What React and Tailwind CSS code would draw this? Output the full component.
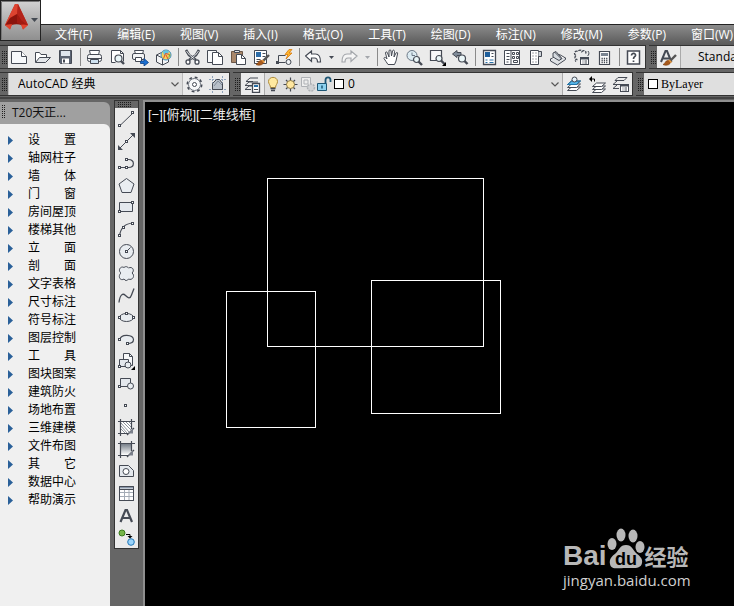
import React from "react";

const ink = "#454a54";

const Icon = ({ children }) => (
  <svg
    viewBox="0 0 17 17"
    className="w-[17px] h-[17px] shrink-0"
    fill="none"
    stroke={ink}
    aria-hidden="true"
  >
    {children}
  </svg>
);

const Node = ({ x, y }) => (
  <rect x={x - 1} y={y - 1} width="2" height="2" fill="#fff" />
);

const Lens = ({ x, y, r = 3 }) => (
  <>
    <path d={`M${x + 2} ${y + 2}l3.5 3.5`} strokeWidth="2.4" />
    <circle cx={x} cy={y} r={r} fill="#eaf6f8" strokeWidth="1.2" />
  </>
);

const Brush = () => (
  <>
    <path d="M10 12l6-6" stroke="#555" strokeWidth="2.4" />
    <path
      d="M3 15.5c2.5-.5 2-4 5-4 2 0 3 1.5 2 3-1.5 2-5 2-7 1z"
      fill="#a85a1c"
      stroke="#8a4715"
      strokeWidth=".8"
    />
    <path d="M9 11l2.5 2.5" stroke="#e8973a" strokeWidth="1.6" />
  </>
);

const Stack = ({ top = "#fff" }) => (
  <>
    <path d="M1.5 14.5l4-3.5h9l-4 3.5z" fill="#fff" />
    <path d="M1.5 11.5l4-3.5h9l-4 3.5z" fill="#fff" />
    <path d="M1.5 8.5l4-3.5h9l-4 3.5z" fill={top} />
  </>
);

const Panel = ({ x, y }) => (
  <>
    <rect x={x} y={y} width="8" height="7" fill="#fff" />
    <path d={`M${x} ${y + 1}h8`} strokeWidth="2" />
    <path d={`M${x + 2} ${y + 3.5}h1m1 0h2.5m-4.5 2h1m1 0h2.5`} />
  </>
);

const icons = {
  new: (
    <>
      <path d="M.5 2.5h10l5 5v7H.5z" fill="#f7f9fb" />
      <path d="M10.5 2.5v5h5" fill="#fff" />
    </>
  ),
  open: (
    <>
      <path d="M1.5 13V3.5h4l1.5 2h5.5v3" fill="#fff" />
      <path d="M1.5 13.5l4-5h11l-5 5z" fill="#e4e7ea" />
    </>
  ),
  save: (
    <>
      <path d="M2.5 1.5h12v13h-11l-1-1z" fill="#5b6473" />
      <path d="M4 2h9v5H4z" fill="#dfe6ee" stroke="none" />
      <path d="M5 9.5h7v5H5z" fill="#fff" stroke="none" />
      <path d="M6 10.5h2v3H6z" fill="#454a54" stroke="none" />
    </>
  ),
  print: (
    <>
      <path d="M4.5 6l-1-4.5h10l-1 4.5" fill="#fff" />
      <rect x="1.5" y="5.5" width="14" height="7" rx="2" fill="#f3f4f5" />
      <path d="M2 9.5h13" />
      <path d="M4.5 10.5h8v4h-8z" fill="#cfe2f0" />
    </>
  ),
  preview: (
    <>
      <path d="M2.5 13.500V1.500h9l3 3v8" fill="#fff" />
      <path d="M11.5 1.5v3h3M2.5 13.5h4" />
      <Lens x={9.5} y={9.5} r={3.5} />
    </>
  ),
  publish: (
    <>
      <path d="M3.5 5l-1-3.5h9l-1 3.5" fill="#fff" />
      <rect x=".5" y="4.5" width="12" height="6" rx="1.5" fill="#f3f4f5" />
      <path d="M3.5 8.5h6v4h-6z" fill="#fff" />
      <path
        d="M8.500 12h3.500v-2.500l4.500 4-4.500 3.500v-2.500H8.500z"
        fill="#1a6fd0"
        stroke="#0b3f86"
        strokeWidth=".8"
      />
    </>
  ),
  globe: (
    <>
      <path d="M1.5 6l6-3 6 3v7l-6 3-6-3z" fill="#f3f4f5" />
      <path d="M1.5 6l6 3 6-3M7.5 9v7" />
      <circle cx="11" cy="6" r="5" fill="#f4d35b" stroke="#3f8fc4" />
      <path d="M8 3c1-2 5-2 6 0l-2 2-3 1z" fill="#5cc4e8" stroke="none" />
      <path d="M8.5 9.5l2-5 4 1M11 6l2 4" stroke="#dc4b2c" />
      <path d="M14 5l1.5 1-2 3.5z" fill="#69b345" stroke="none" />
    </>
  ),
  cut: (
    <>
      <path d="M2 1l3 5 7 5M15 1l-3 5-7 5" strokeWidth="2.6" />
      <path d="M2.500 2l3 4 5 4M14.500 2l-3 4-5 4" stroke="#fff" strokeWidth=".8" />
      <ellipse cx="4" cy="13" rx="2" ry="2.2" fill="#fff" strokeWidth="1.3" />
      <ellipse cx="13" cy="13" rx="2" ry="2.2" fill="#fff" strokeWidth="1.3" />
    </>
  ),
  copy: (
    <>
      <path d="M.5 1.5h9v12h-9z" fill="#f7f8f9" />
      <path d="M5.5 3.5h6l4 4v8h-10z" fill="#fff" />
      <path d="M11.5 3.5v4h4" />
    </>
  ),
  paste: (
    <>
      <path d="M1.5 2.5h11v11h-11z" fill="#a9876a" stroke="#6c5747" />
      <path d="M4.5 1.5h5v2h-5z" fill="#e4e6e8" />
      <path d="M6.5 5.5h5l4 4v6h-9z" fill="#fff" />
      <path d="M11.5 5.5v4h4" />
    </>
  ),
  match: (
    <>
      <path d="M1.5 1.5h12v13h-12z" fill="#fff" />
      <path d="M3 3h5v5H3z" fill="#2c6ca8" stroke="none" />
      <path d="M9.5 4.5h3M9.5 7.5h3M3.5 10.5h4M3.5 12.5h3" />
      <Brush />
    </>
  ),
  block: (
    <>
      <path d="M2.5 13.5v-7h7M1.5 13.5h8M13.5 10v3" />
      <circle cx="12.5" cy="13" r="2.5" fill="#eef1f4" />
      <path d="M0 12h3v3H0z" fill={ink} stroke="none" />
      <path
        d="M13 .5l-4 5h3L10 10l6-6h-3l3-3.500z"
        fill="#ffb72e"
        stroke="#d8790b"
        strokeWidth=".8"
      />
    </>
  ),
  undo: (
    <path
      d="M.5 7l6-5v3h4c4 0 5 3 5 8h-3c0-3-1-4-3-4h-3v3.5z"
      fill="#fff"
      strokeWidth="1.2"
    />
  ),
  redo: (
    <path
      d="M16 7l-6-5v3H6c-4 0-5 3-5 8h3c0-3 1-4 3-4h3v3.5z"
      fill="#f5f5f5"
      stroke="#a3a6ab"
      strokeWidth="1.2"
    />
  ),
  pan: (
    <path
      d="M5 15.5c-1-2-3-4-4-6 0-1.5 1.5-1.5 3 .5L2.5 4c0-1.5 1.5-1.5 2 0L6 8V2c0-1.500 2-1.500 2 0l.5 5 1-5c.5-1.500 2-1 2 .5L11 8l2-4c1-1 2-.5 1.500 1L13 12l-1.500 3.500z"
      fill="#fff"
    />
  ),
  zoomTime: (
    <>
      <circle cx="6" cy="6.5" r="5" fill="#dcebf2" stroke="#6b7886" />
      <path d="M6 3.5v3h3" stroke="#6b7886" />
      <Lens x={10.5} y={10.5} />
    </>
  ),
  zoomWin: (
    <>
      <path d="M1.5 1.5h11v10h-11z" fill="#f7f8f9" strokeWidth="1.2" />
      <Lens x={10} y={9.5} />
      <path d="M17 13v4h-4z" fill="#000" stroke="none" />
    </>
  ),
  zoomPrev: (
    <>
      <path d="M.5 5L5 1.5v2h4v3H5v2z" fill="#7f8b99" />
      <Lens x={10} y={9.5} r={3.5} />
    </>
  ),
  properties: (
    <>
      <path d="M2.5 1.5h12v14h-12z" fill="#fff" strokeWidth="1.3" />
      <path d="M4 3h5v5H4z" fill="#1f5f9c" stroke="none" />
      <path d="M10.5 4.5h2M10.5 7.5h2" />
      <path d="M4.5 11h2m2 0h4M4.5 13.5h2m2 0h4" stroke="#2870a8" />
    </>
  ),
  design: (
    <>
      <path d="M.5 1.5h15v14H.5zM7 2v13" fill="#fff" />
      <path d="M2.5 4.5h3M2.5 7.5h3M2.5 10.5h3M2.5 13h2" />
      <path d="M8.5 3.5h2v2h-2zm4 0h2v2h-2zm-4 4h2v2h-2zm4 0h2v2h-2zm-3 4h4v2h-4z" />
    </>
  ),
  palettes: (
    <>
      <path d="M3.5 1.5h8v14h-8z" fill="#fff" />
      <path d="M11.5 2.5h3v5h-3" fill="#cdd2d8" />
      <path d="M5.5 4h1m2 0h1m-4 3h1m2 0h1m-4 3h1m2 0h1m-4 3h1m2 0h1" />
    </>
  ),
  sheets: (
    <>
      <path d="M.5 10l9-4.500 6 3.500-8 5.500z" fill="#fff" />
      <path d="M.5 10v2l7 4 8-5.500V9" fill="#dfe2e5" />
      <path d="M3 8V4l3-1.500 6 7-3 2z" fill="#d5dadf" />
      <path d="M4.5 3l7 7" />
    </>
  ),
  markup: (
    <>
      <path
        d="M3 6.5C0 5 2 1 5 2.500c1-2 4-1.500 4 0 2-2 5 0 3.500 2M3 6.500c-2 2-1 4.500 1.500 4"
        strokeDasharray="3 1"
        strokeWidth="1.3"
      />
      <path d="M15 2c1.5 2 1 4-.5 5M3 13c-1-1-1-2 .5-3" />
      <Panel x={7.5} y={8.5} />
    </>
  ),
  calc: (
    <>
      <path d="M3.5 2.5h10v13h-10z" fill="#fff" strokeWidth="1.2" />
      <path d="M5 4h7v3H5z" fill="#7b8592" stroke="none" />
      <path
        d="M5.5 9.5h6M5.5 11.5h6M5.5 13.5h6"
        strokeDasharray="1.3 1"
        strokeWidth="1.3"
      />
    </>
  ),
  help: (
    <>
      <path d="M2.5 2h12v13h-12z" fill="#fff" strokeWidth="1.5" />
      <path
        d="M6.5 6.5c0-3 4.5-2.500 4 0-.3 1.300-2 1.200-2 3.500M8.500 11.500V13"
        strokeWidth="1.7"
      />
    </>
  ),
  textStyle: (
    <>
      <path d="M1 13L5.5 2H7l4.500 11M2.500 9.500h7" strokeWidth="2" />
      <Brush />
    </>
  ),
  gear: (
    <>
      <circle cx="8.5" cy="8.5" r="7.2" strokeWidth="1.6" strokeDasharray="2.8 2.855" />
      <circle cx="8.5" cy="8.5" r="6" fill="#f7f8f9" stroke="#6d737d" />
      <circle cx="8.5" cy="8.5" r="2" fill="#fff" />
    </>
  ),
  house: (
    <>
      <path
        d="M3.5 0v17M13.5 0v17M0 3.5h17M0 13.5h17"
        strokeDasharray="2 1"
        stroke="#8fa3bb"
      />
      <path d="M3.5 13.5v-6l4-4h3l3 4v6z" fill="#b7bfc9" />
      <path d="M5 10l4-5 4 4" stroke="#838e9b" />
    </>
  ),
  layerProps: (
    <>
      <path d="M2 5.5L6 2h8M1 9.5L5 6h9M1 13.5L5 10h3M2 5.5h7M1 9.5h7M1 13.5h6" />
      <path d="M8.5 7.5h7v9h-7z" fill="#fff" strokeWidth="1.3" />
      <path d="M10 9h4v2h-4z" fill="#2870a8" stroke="none" />
      <path d="M10 13.5h4" />
    </>
  ),
  layerCurrent: (
    <>
      <Stack top="#55b5e8" />
      <path d="M1.5 8.5l4-3.5h9l-4 3.5z" stroke="#2077ad" />
      <circle cx="8.5" cy="3.5" r="2.5" fill="#e4f2fa" />
    </>
  ),
  layerPrev: (
    <>
      <g transform="translate(2 2)">
        <Stack />
      </g>
      <path d="M0 3l3-3v6z" fill="#000" stroke="none" />
      <path d="M3 3h2.5v2.5" stroke="#000" />
    </>
  ),
  layerStates: (
    <>
      <path d="M3 4.5l3-3h9l-3 3zM1 8.5L5 5M1 8.5h8M1 12.500L5 9M1 12.500h6" />
      <Panel x={8.5} y={8.5} />
    </>
  ),
  bulb: (
    <>
      <path
        d="M5.5 11.5C5.500 9 3.500 8 3.500 5.500c0-5.500 9-5.500 9 0 0 2.500-2 3.500-2 6z"
        fill="#ffe9a0"
        stroke="#b08d3c"
      />
      <path d="M5.5 12.5h5M6 14.5h4" strokeWidth="1.5" />
    </>
  ),
  sun: (
    <>
      <path d="M8.5 1.500v14M1.500 8.500h14M4 4l9 9M13 4l-9 9" strokeWidth="1.2" />
      <circle cx="8.5" cy="8.5" r="4" fill="#ffe7a0" stroke="#8e7a46" />
    </>
  ),
  viewport: (
    <g stroke="#aeb1b5">
      <path d="M2.5 1.5h9v9h-9zM5 4h4v4H5z" fill="#eee" />
      <circle
        cx="12"
        cy="11.5"
        r="3.5"
        fill="#d0d2d4"
        strokeDasharray="2 1"
        strokeWidth="1.5"
      />
    </g>
  ),
  lock: (
    <>
      <path d="M9.5 7V4c0-3.500 5-3.500 5 0v2" strokeWidth="1.8" stroke="#1d5674" />
      <path d="M1.5 7.5h9v7h-9z" fill="#8ed1ee" stroke="#1d5674" />
      <path d="M6 9.500v3" stroke="#1d5674" strokeWidth="1.5" />
    </>
  ),
  line: (
    <>
      <path d="M1.5 15L15 2" />
      <Node x={1.5} y={14.5} />
      <Node x={14.5} y={1.5} />
    </>
  ),
  ray: (
    <>
      <path d="M2 15L15 2" />
      <path d="M0 17v-5l5 5zM17 0v5l-5-5z" fill={ink} stroke="none" />
      <Node x={8.5} y={8.5} />
    </>
  ),
  polyline: (
    <>
      <path d="M1.5 12.5h9c6.500 0 6.500-8 0-8h-2" strokeWidth="1.2" />
      <Node x={1.5} y={12.5} />
      <Node x={8.5} y={12.5} />
      <Node x={8.5} y={4.5} />
    </>
  ),
  polygon: <path d="M8.500 1.500L16 7l-3 8.500H4L1 7z" fill="#e9edf1" />,
  rect: (
    <>
      <path d="M1.5 3.5h13v9h-13z" fill="#e4e8ed" />
      <Node x={1.5} y={12.5} />
      <Node x={14.5} y={3.5} />
    </>
  ),
  arc: (
    <>
      <path d="M1.5 15C2.500 7 7 2.500 15 2" strokeWidth="1.2" />
      <Node x={1.5} y={14.5} />
      <Node x={5.5} y={6.5} />
      <Node x={14.5} y={2.5} />
    </>
  ),
  circle: (
    <>
      <circle cx="8.5" cy="8.5" r="7" fill="#e9edf1" />
      <path d="M8.5 8.5l4-4" />
      <Node x={8.5} y={8.5} />
    </>
  ),
  cloud: (
    <path
      d="M3 8C-.5 5.500 2.500.5 6 2.500c2.500-2 4 0 4.500.5 4-2 6.500 2.500 3.500 5 3.500 2.500.5 8-3.500 6-1 2-3.500 2-4.500 0C2 16.500-.5 11 3 8z"
      fill="#e9edf1"
    />
  ),
  spline: (
    <path
      d="M1 15.500C2 7 5 6 7.500 8.500s4.500 4 6-.5L16 1.500"
      strokeWidth="1.3"
    />
  ),
  ellipse: (
    <>
      <ellipse cx="8.5" cy="8.5" rx="7" ry="4" fill="#e9edf1" />
      <Node x={1.5} y={8.5} />
      <Node x={15.5} y={8.5} />
      <Node x={8.5} y={4.5} />
    </>
  ),
  ellipseArc: (
    <>
      <path
        d="M2 8.500c1-6 13-5 13.500 0 0 2.500-2.500 4-6 4"
        fill="#e9edf1"
        strokeWidth="1.2"
      />
      <Node x={1.5} y={8.5} />
      <Node x={9.5} y={12.5} />
    </>
  ),
  insert: (
    <>
      <path d="M5.5 8V.5h6l3 3v9h-3" fill="#f7f8f9" />
      <path d="M11.5.5v3h3" />
      <path d="M1.5 6.5h9v7h-9z" fill="#e4e8ed" />
      <circle cx="10" cy="12" r="3" fill="#e9edf1" />
      <Node x={1.5} y={13.5} />
      <path d="M17 13v4h-4z" fill="#000" stroke="none" />
    </>
  ),
  makeBlock: (
    <>
      <path d="M2.5 3.5h10v8h-10z" fill="#e4e8ed" />
      <circle cx="12.5" cy="11" r="3" fill="#e9edf1" />
      <Node x={1.5} y={11.5} />
    </>
  ),
  point: <Node x={7.5} y={8.5} />,
  hatch: (
    <>
      <path d="M3 3h11v8l-4 3H3z" fill="#fff" stroke="none" />
      <path
        d="M3 4l8 9M3 7l6 7M3 10l4 4M5 3l8 8M8 3l6 6M11 3l3 3"
        stroke="#6f7681"
        strokeWidth=".8"
      />
      <path d="M0 2.5h17M2.5 0v17M13.5 0v10M0 14.5h10M16 9l-7 7" strokeWidth="1.2" />
      <path d="M10 14.5l5-5v5z" fill="#7b808b" stroke="none" />
    </>
  ),
  gradient: (
    <>
      <defs>
        <linearGradient id="fade" x1="0" y1="0" x2="0" y2="1">
          <stop offset="0" stopColor="#77808a" />
          <stop offset="1" stopColor="#fff" />
        </linearGradient>
      </defs>
      <path d="M3 3h11v8l-4 3H3z" fill="url(#fade)" stroke="none" />
      <path d="M0 2.5h17M2.5 0v17M13.5 0v10M0 14.5h10M16 9l-7 7" strokeWidth="1.2" />
      <path d="M10 14.5l5-5v5z" fill="#7b808b" stroke="none" />
    </>
  ),
  region: (
    <>
      <path d="M1.5 2.5h9l5 5v6h-14z" fill="#e4e8ed" />
      <circle cx="8" cy="8.5" r="3" fill="#fff" />
    </>
  ),
  table: (
    <>
      <path d="M1.5 1.5h14v14h-14z" fill="#fff" />
      <path d="M1.5 2.5h14" stroke="#8996a8" strokeWidth="2" />
      <path d="M2 7.5h13M2 11.5h13M6.5 5v10M11 5v10" stroke="#a3abb5" />
      <path d="M1.5 4.5h14M1.5 1.5h14v14h-14z" />
    </>
  ),
  mtext: <path d="M2.500 15L7.500 3h1.500l5 12M4.500 11h8" strokeWidth="2.2" />,
  addSelected: (
    <>
      <circle cx="4" cy="4" r="3" fill="#76b548" stroke="#397a1d" />
      <circle cx="13" cy="13" r="3.3" fill="#9ad4fb" stroke="#2378b8" />
      <path d="M8 5.5h4v2" stroke="#000" />
      <path d="M9.500 7h5L12 9.500z" fill="#000" stroke="none" />
    </>
  ),
};

const menus = [
  "文件(F)",
  "编辑(E)",
  "视图(V)",
  "插入(I)",
  "格式(O)",
  "工具(T)",
  "绘图(D)",
  "标注(N)",
  "修改(M)",
  "参数(P)",
  "窗口(W)",
];

const standardTools = [
  ["new", "open", "save"],
  ["print", "preview", "publish", "globe"],
  ["cut", "copy", "paste", "match", "block"],
  ["undo", "caret", "redo", "caretOff"],
  ["pan", "zoomTime", "zoomWin", "zoomPrev"],
  ["properties", "design", "palettes", "sheets", "markup", "calc"],
  ["help"],
];

const drawTools = [
  "line",
  "ray",
  "polyline",
  "polygon",
  "rect",
  "arc",
  "circle",
  "cloud",
  "spline",
  "ellipse",
  "ellipseArc",
  "insert",
  "makeBlock",
  "point",
  "hatch",
  "gradient",
  "region",
  "table",
  "mtext",
  "addSelected",
];

const categories = [
  "设置",
  "轴网柱子",
  "墙体",
  "门窗",
  "房间屋顶",
  "楼梯其他",
  "立面",
  "剖面",
  "文字表格",
  "尺寸标注",
  "符号标注",
  "图层控制",
  "工具",
  "图块图案",
  "建筑防火",
  "场地布置",
  "三维建模",
  "文件布图",
  "其它",
  "数据中心",
  "帮助演示",
];

const ToolButton = ({ name }) => {
  if (name === "caret" || name === "caretOff") {
    return (
      <button
        aria-label={name}
        className="w-[13px] h-[22px] flex justify-center items-center"
      >
        <svg viewBox="0 0 5 3" className="w-[5px] h-[3px]" aria-hidden="true">
          <path d="M0 0h5L2.5 3z" fill={name === "caret" ? ink : "#a3a6ab"} />
        </svg>
      </button>
    );
  }
  return (
    <button
      aria-label={name}
      className="w-[23px] h-[22px] pt-[3px] flex justify-center items-start shrink-0"
    >
      <Icon>{icons[name]}</Icon>
    </button>
  );
};

const Grip = () => (
  <div className="w-2 self-stretch flex items-center justify-center bg-[#666] shrink-0">
    <svg
      viewBox="0 0 5 13"
      className="w-[5px] h-[13px]"
      stroke="#1d1d1d"
      strokeDasharray="1 1"
      aria-hidden="true"
    >
      <path d="M.5 0v13M2.5 0v13M4.5 0v13" />
    </svg>
  </div>
);

const Bar = ({ children }) => (
  <div className="h-6 flex items-stretch border-y border-r border-[#333] bg-[#ebebeb] shrink-0">
    <Grip />
    {children}
  </div>
);

const Chevron = () => (
  <svg
    viewBox="0 0 8 5"
    className="absolute right-[3px] top-[9px] w-2 h-[5px] pointer-events-none"
    fill="none"
    stroke="#555"
    strokeWidth="1.2"
    aria-hidden="true"
  >
    <path d="M.5.5L4 4 7.5.5" />
  </svg>
);

const AppMenu = () => (
  <button
    aria-label="Application menu"
    className="absolute left-0 top-0 w-[41px] h-[41px] border border-[#222] bg-linear-to-b from-[#d2d2d2] to-[#8f8f8f]"
  >
    <svg viewBox="1 1 39 39" className="w-full h-full" aria-hidden="true">
      <path d="M15 4h3l10 21-5 4.500-2-5c-3-1-6-1-9 0l-2 5L5 25z" fill="#cf3120" />
      <path d="M15 4h3l-1 10-7 4-5 7z" fill="#dd4430" />
      <path d="M18 4l10 21-7-5-4-6z" fill="#b3241a" />
      <path d="M10 18l7-4 4 6 2 5.500c-4-1.500-8-1.500-12-.5l-6 .5z" fill="#8c150d" />
      <path d="M17 14l4 6 7 5-7-.5-4-1.500z" fill="#a21b11" />
      <path d="M5 25l7-1-2 5.500zM28 25l-7-.5 2 5z" fill="#e2452f" />
      <path d="M31 18h7l-3.500 4z" fill="#444a52" />
      <path d="M1.500 39.500v-38h38" fill="none" stroke="#777" />
    </svg>
  </button>
);

const MenuBar = () => (
  <nav className="h-[21px] pl-[55px] flex gap-[25px] overflow-hidden border-t border-[#222] bg-linear-to-b from-[#8c8c8c] to-[#595959]">
    {menus.map((menu) => (
      <button
        key={menu}
        className="text-xs leading-5 text-white whitespace-nowrap shrink-0"
      >
        {menu}
      </button>
    ))}
  </nav>
);

const StandardRow = () => (
  <div className="flex gap-[3px] overflow-hidden">
    <Bar>
      {standardTools.map((group, i) => (
        <React.Fragment key={i}>
          {i > 0 && (
            <div className="w-[6px] flex justify-center items-center">
              <div className="w-px h-[18px] bg-[#8a8a8a]" />
            </div>
          )}
          {group.map((name) => (
            <ToolButton key={name} name={name} />
          ))}
        </React.Fragment>
      ))}
    </Bar>
    <Bar>
      <ToolButton name="textStyle" />
      <select
        aria-label="Text style"
        className="w-40 pl-[17px] appearance-none border-l border-[#aaa] bg-[#dfdfdf] text-xs text-black"
      >
        <option>Standard</option>
      </select>
    </Bar>
  </div>
);

const LayerRow = () => (
  <div className="flex gap-[3px] overflow-hidden">
    <Bar>
      <div className="relative w-[175px] flex border-x border-[#bbb]">
        <select
          aria-label="Workspace"
          className="w-full pl-[9px] appearance-none bg-[#dfdfdf] text-xs text-black"
        >
          <option>AutoCAD 经典</option>
        </select>
        <Chevron />
      </div>
      <ToolButton name="gear" />
      <ToolButton name="house" />
    </Bar>
    <Bar>
      <ToolButton name="layerProps" />
      <div className="relative w-[299px] flex items-center border-x border-[#aaa] bg-[#dfdfdf]">
        <Icon>{icons.bulb}</Icon>
        <Icon>{icons.sun}</Icon>
        <Icon>{icons.viewport}</Icon>
        <Icon>{icons.lock}</Icon>
        <div className="w-[10px] h-[10px] ml-px border border-black bg-white shrink-0" />
        <select
          aria-label="Layer"
          className="flex-1 h-full pl-1 appearance-none bg-transparent text-xs text-black"
        >
          <option>0</option>
        </select>
        <Chevron />
      </div>
      <ToolButton name="layerCurrent" />
      <ToolButton name="layerPrev" />
      <ToolButton name="layerStates" />
    </Bar>
    <Bar>
      <div className="w-[200px] pl-1 flex items-center bg-[#dfdfdf]">
        <div className="w-[10px] h-[10px] border border-black bg-white shrink-0" />
        <select
          aria-label="Color"
          className="flex-1 h-full pl-[3px] appearance-none bg-transparent text-xs text-black font-['Liberation_Serif',serif]"
        >
          <option>ByLayer</option>
        </select>
      </div>
    </Bar>
  </div>
);

const Palette = () => (
  <aside className="w-[110px] mt-[3px] flex flex-col bg-[#a0a0a0] rounded-tr-md shrink-0">
    <div className="h-[22px] pl-[2px] flex items-center gap-[5px]">
      <svg
        viewBox="0 0 5 13"
        className="w-[5px] h-[13px] mb-1"
        stroke="#222"
        strokeDasharray="1 1"
        aria-hidden="true"
      >
        <path d="M.5 0v13M2.5 0v13" />
      </svg>
      <h2 className="text-xs text-[#111]">T20天正...</h2>
    </div>
    <ul className="flex-1 pt-[7px] bg-[#f0f0f0] rounded-tr-md">
      {categories.map((label) => (
        <li key={label}>
          <button className="h-[18px] pl-2 flex items-center gap-[15px]">
            <svg viewBox="0 0 5 9" className="w-[5px] h-[9px]" aria-hidden="true">
              <path d="M0 0l5 4.5L0 9z" fill="#2a6099" />
            </svg>
            <span className="w-12 flex justify-between text-xs leading-[18px] text-black">
              {label.length === 2
                ? label.split("").map((char) => <span key={char}>{char}</span>)
                : label}
            </span>
          </button>
        </li>
      ))}
    </ul>
  </aside>
);

const DrawToolbar = () => (
  <div className="ml-1 mt-px self-start w-[25px] border border-[#333] bg-[#ebebeb] shrink-0">
    <div className="h-[7px] pl-[3px] flex items-center bg-[#666]">
      <svg
        viewBox="0 0 13 5"
        className="w-[13px] h-[5px]"
        stroke="#1d1d1d"
        strokeDasharray="1 1"
        aria-hidden="true"
      >
        <path d="M0 .5h13M0 2.5h13M0 4.5h13" />
      </svg>
    </div>
    {drawTools.map((name) => (
      <ToolButton key={name} name={name} />
    ))}
  </div>
);

const Watermark = () => (
  <div className="absolute right-[38px] bottom-[16px] w-[133px] text-[#b8b8b8]">
    <div className="h-[42px] flex items-end">
      <span className="text-[28px] leading-[28px] font-bold font-['Liberation_Sans',sans-serif]">
        Bai
      </span>
      <svg
        viewBox="0 0 38 42"
        className="w-[38px] h-[42px] shrink-0"
        fill="currentColor"
        aria-hidden="true"
      >
        <ellipse cx="5" cy="16" rx="4.5" ry="6" />
        <ellipse cx="14" cy="7" rx="4.5" ry="6.5" />
        <ellipse cx="26" cy="8" rx="4.5" ry="6.5" />
        <ellipse cx="33" cy="19" rx="4.5" ry="6" />
        <path d="M19 17c6 0 7 5 10 8 4 3 7 6 6 10-1 6-8 5-16 5S4 42 3 36c-1-5 2-8 6-11 3-3 4-8 10-8z" />
        <text
          x="19"
          y="37"
          textAnchor="middle"
          fill="#000"
          className="text-[18px] font-bold font-['Liberation_Sans',sans-serif]"
        >
          du
        </text>
      </svg>
      <span className="text-[22px] leading-[28px] font-bold whitespace-nowrap">
        经验
      </span>
    </div>
    <div className="text-[15px] leading-[20px] text-[#d0d0d0]">
      jingyan.baidu.com
    </div>
  </div>
);

const DrawingArea = () => (
  <main className="relative flex-1 ml-1 mt-px border-l-2 border-t-2 border-[#8f8f8f] bg-black overflow-hidden">
    <svg
      className="absolute inset-0 w-full h-full"
      fill="none"
      stroke="#fff"
      aria-hidden="true"
    >
      <rect x="122.5" y="76.5" width="216" height="168" />
      <rect x="81.5" y="189.5" width="89" height="136" />
      <rect x="226.5" y="178.5" width="129" height="133" />
    </svg>
    <p className="relative pl-[3px] pt-1 text-[13px] leading-[18px] text-[#eee] font-['Liberation_Sans','Noto_Sans_CJK_SC',sans-serif]">
      [−][俯视][二维线框]
    </p>
    <Watermark />
  </main>
);

const App = () => {
  return (
    <div className="relative h-screen flex flex-col overflow-hidden bg-[#666] font-['Open_Sans','Noto_Sans_CJK_SC',sans-serif]">
      <header className="bg-white">
        <div className="h-6" />
        <MenuBar />
        <AppMenu />
      </header>
      <div className="flex flex-col gap-[3px] bg-[#666]">
        <StandardRow />
        <LayerRow />
      </div>
      <div className="mt-px flex-1 flex min-h-0 border-t-2 border-[#444]">
        <Palette />
        <DrawToolbar />
        <DrawingArea />
      </div>
    </div>
  );
};

export default App;
